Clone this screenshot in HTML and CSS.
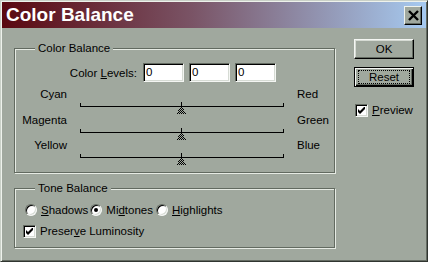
FILE: index.html
```html
<!DOCTYPE html>
<html>
<head>
<meta charset="utf-8">
<link rel="stylesheet" href="styles.css">
</head>
<body>
<div class="window">
  <div class="titlebar">
    <span class="title">Color Balance</span>
    <div class="close">
      <svg width="11" height="11" viewBox="0 0 11 11"><path d="M1 1 L10 10 M10 1 L1 10" stroke="#000" stroke-width="2.4" fill="none"/></svg>
    </div>
  </div>
  <div class="content">
    <div class="left">
      <div class="group g1">
        <span class="legend">Color Balance</span>
        <div class="levels">
          <span class="levels-label">Color <u>L</u>evels:</span>
          <div class="field">0</div>
          <div class="field">0</div>
          <div class="field">0</div>
        </div>
        <div class="srow r1">
          <span class="lab-l">Cyan</span>
          <svg class="track" width="204" height="13" viewBox="0 0 204 13"><use href="#slider"/></svg>
          <span class="lab-r">Red</span>
        </div>
        <div class="srow">
          <span class="lab-l">Magenta</span>
          <svg class="track" width="204" height="13" viewBox="0 0 204 13"><use href="#slider"/></svg>
          <span class="lab-r">Green</span>
        </div>
        <div class="srow">
          <span class="lab-l">Yellow</span>
          <svg class="track" width="204" height="13" viewBox="0 0 204 13"><use href="#slider"/></svg>
          <span class="lab-r">Blue</span>
        </div>
      </div>
      <div class="group g2">
        <span class="legend">Tone Balance</span>
        <div class="radios">
          <span class="opt"><span class="radio"></span><span><u>S</u>hadows</span></span>
          <span class="opt"><span class="radio on"></span><span>Mi<u>d</u>tones</span></span>
          <span class="opt"><span class="radio"></span><span><u>H</u>ighlights</span></span>
        </div>
        <div class="chkrow">
          <span class="check"><svg width="7" height="7" viewBox="0 0 7 7"><path d="M0 2 L2 4 L6 0 L7 0 L7 2 L2 7 L0 5 Z" fill="#000"/></svg></span>
          <span>Preser<u>v</u>e Luminosity</span>
        </div>
      </div>
    </div>
    <div class="right">
      <div class="btn">OK</div>
      <div class="btn default"><span class="focus">Reset</span></div>
      <div class="chkrow preview">
        <span class="check"><svg width="7" height="7" viewBox="0 0 7 7"><path d="M0 2 L2 4 L6 0 L7 0 L7 2 L2 7 L0 5 Z" fill="#000"/></svg></span>
        <span><u>P</u>review</span>
      </div>
    </div>
  </div>
</div>
<svg width="0" height="0" class="defs">
  <defs>
    <pattern id="dither" width="2" height="2" patternUnits="userSpaceOnUse">
      <rect width="2" height="2" fill="#a0a89e"/>
      <rect width="1" height="1" fill="#000"/>
      <rect x="1" y="1" width="1" height="1" fill="#000"/>
    </pattern>
    <g id="slider" shape-rendering="crispEdges">
      <path d="M0.5 1 V4.5 H203.5 V1" stroke="#000" fill="none"/>
      <path d="M101.5 0 V4.5" stroke="#000" fill="none"/>
      <polygon points="101.5,5 107.5,12 95.5,12" fill="url(#dither)"/>
    </g>
  </defs>
</svg>
</body>
</html>
```
FILE: styles.css
```css
html, body {
  margin: 0;
  padding: 0;
  background: #a0a89e;
}
body {
  font-family: "Liberation Sans", Arial, sans-serif;
  font-size: 11.5px;
  color: #000;
}
u { text-decoration: underline; text-underline-offset: 1px; }
.defs { position: absolute; }
.window {
  width: 428px;
  height: 262px;
  box-sizing: border-box;
  background: #a0a89e;
  border: 1px solid;
  border-color: #c9d0c7 #303530 #303530 #c9d0c7;
  box-shadow: inset 1px 1px 0 #eef2ec, inset -1px -1px 0 #646b62;
  padding: 1px;
}
.titlebar {
  height: 26px;
  background: linear-gradient(to right, #5a0810 0%, #7a5466 45%, #a6caf0 100%);
  display: flex;
  align-items: center;
  justify-content: space-between;
  padding: 0 4px 0 4px;
}
.title {
  color: #fff;
  font-weight: bold;
  font-size: 19px;
  line-height: 26px;
}
.close {
  width: 18px;
  height: 19px;
  box-sizing: border-box;
  background: #a0a89e;
  border: 1px solid;
  border-color: #eef2ec #000 #000 #eef2ec;
  box-shadow: inset -1px -1px 0 #646b62;
  display: flex;
  align-items: center;
  justify-content: center;
  margin-top: 1px;
}
.content {
  display: flex;
  align-items: flex-start;
  padding: 11px 0 0 12px;
}
.left {
  width: 321px;
  padding-top: 9px;
  display: flex;
  flex-direction: column;
  gap: 15px;
}
.group {
  position: relative;
  box-sizing: border-box;
  border: 1px solid #626a60;
  box-shadow: inset 1px 1px 0 #e6ebe4, 1px 1px 0 #e6ebe4;
}
.legend {
  position: absolute;
  top: -8px;
  left: 20px;
  padding: 0 3px;
  background: #a0a89e;
  line-height: 14px;
}
.g1 { height: 125px; padding-top: 14px; }
.g2 { height: 60px; padding-top: 14px; }
.levels {
  display: flex;
  align-items: center;
  gap: 5px;
  height: 19px;
}
.levels-label {
  width: 122px;
  text-align: right;
  margin-right: 1px;
}
.field {
  width: 41px;
  height: 19px;
  box-sizing: border-box;
  background: #fff;
  border: 1px solid;
  border-color: #646b62 #f4f6f3 #f4f6f3 #646b62;
  box-shadow: inset 1px 1px 0 #000, inset -1px -1px 0 #d6dbd4;
  padding-left: 2px;
  line-height: 17px;
}
.srow {
  display: grid;
  grid-template-columns: 52px 204px auto;
  column-gap: 13px;
  height: 25px;
  align-items: start;
}
.r1 { height: 26px; margin-top: 5px; }
.lab-l { text-align: right; line-height: 14px; }
.lab-r { line-height: 14px; }
.track { margin-top: 15px; display: block; }
.radios {
  display: flex;
  gap: 2px;
  padding-left: 10px;
  height: 14px;
  align-items: center;
}
.opt {
  display: flex;
  align-items: center;
  gap: 4px;
  line-height: 14px;
}
.opt + .opt + .opt { margin-left: 1px; }
.radio {
  width: 12px;
  height: 12px;
  box-sizing: border-box;
  border-radius: 50%;
  background: #fff;
  border: 1px solid;
  border-color: #646b62 #f4f6f3 #f4f6f3 #646b62;
  box-shadow: inset 1px 1px 0 #000, inset -1px -1px 0 #d6dbd4;
  display: flex;
  align-items: center;
  justify-content: center;
}
.radio.on::after {
  content: "";
  width: 4px;
  height: 4px;
  border-radius: 50%;
  background: #000;
}
.chkrow {
  display: flex;
  align-items: center;
  gap: 4px;
  line-height: 14px;
}
.g2 .chkrow { margin-top: 7px; padding-left: 8px; }
.check {
  width: 13px;
  height: 13px;
  box-sizing: border-box;
  background: #fff;
  border: 1px solid;
  border-color: #646b62 #f4f6f3 #f4f6f3 #646b62;
  box-shadow: inset 1px 1px 0 #000, inset -1px -1px 0 #d6dbd4;
  display: flex;
  align-items: center;
  justify-content: center;
}
.check svg { display: block; }
.right {
  margin-left: 19px;
  display: flex;
  flex-direction: column;
  width: 60px;
}
.btn {
  width: 60px;
  height: 20px;
  box-sizing: border-box;
  border: 1px solid;
  border-color: #f4f6f3 #000 #000 #f4f6f3;
  box-shadow: inset -1px -1px 0 #646b62, inset 1px 1px 0 #d6dbd4;
  display: flex;
  align-items: center;
  justify-content: center;
  line-height: 14px;
}
.btn.default {
  margin-top: 8px;
  border: 1px solid #000;
  box-shadow: inset 1px 1px 0 #f4f6f3, inset -1px -1px 0 #000, inset -2px -2px 0 #646b62;
}
.focus {
  border: 1px dotted #000;
  width: 50px;
  height: 12px;
  display: flex;
  align-items: center;
  justify-content: center;
}
.preview { margin-top: 16px; margin-left: 1px; }
```
